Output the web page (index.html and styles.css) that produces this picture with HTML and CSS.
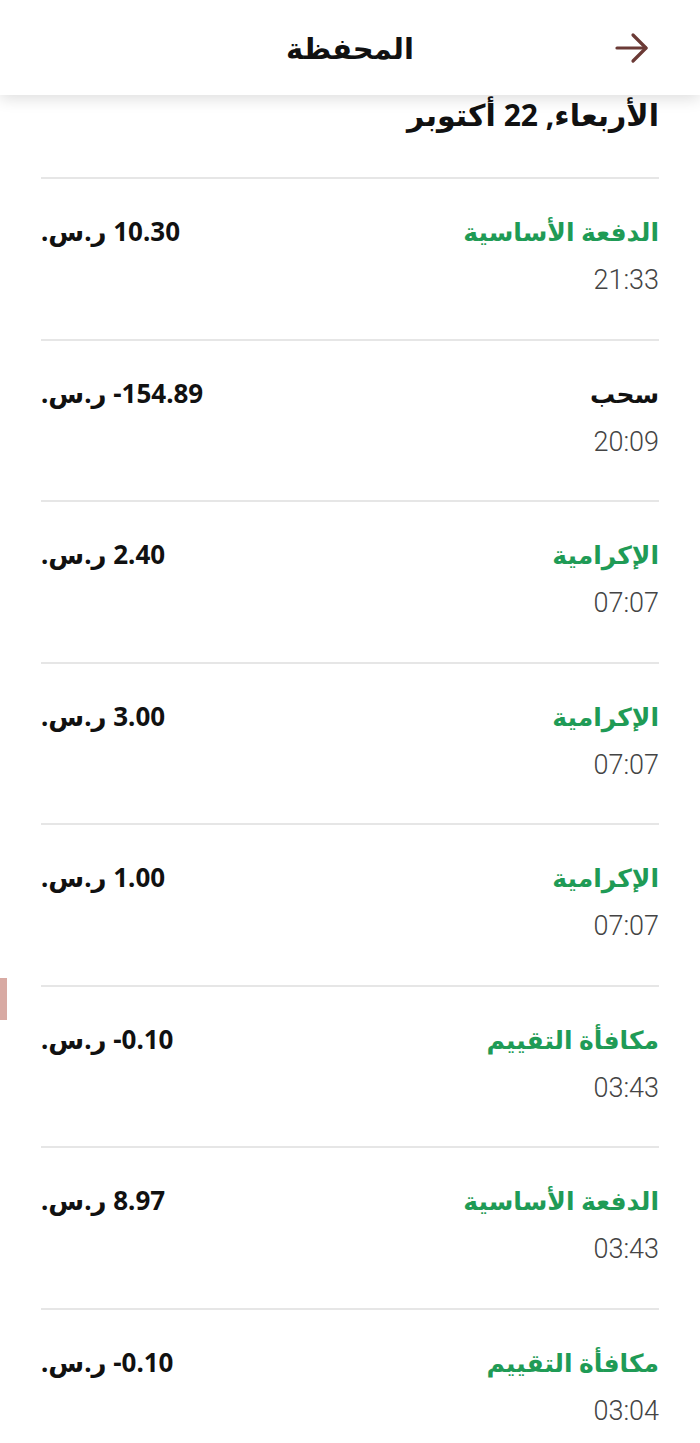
FILE: index.html
```html
<!DOCTYPE html>
<html lang="ar" dir="rtl">
<head>
    <meta charset="UTF-8">
    <meta name="viewport" content="width=device-width, initial-scale=1.0">
    <title>المحفظة</title>
    <link rel="stylesheet" href="styles.css">
</head>
<body>
    <div class="header">
        <button class="back-btn" aria-label="رجوع">
            <svg width="40" height="40" viewBox="0 0 40 40" fill="none" stroke="#6b3a36" stroke-width="3.2" stroke-linecap="round" stroke-linejoin="round">
                <path d="M5 20 H34"/>
                <path d="M21 7 L34 20 L21 33"/>
            </svg>
        </button>
        <h1 class="title">المحفظة</h1>
    </div>

    <div class="main-content">
        <h2 class="day-title">الأربعاء, 22 أكتوبر</h2>

        <div class="history-list">
            <div class="history-item">
                <div class="info">
                    <div class="label green">الدفعة الأساسية</div>
                    <div class="time">21:33</div>
                </div>
                <div class="amount" dir="ltr"><span dir="rtl">ر.س.</span> 10.30</div>
            </div>
            <div class="history-item">
                <div class="info">
                    <div class="label">سحب</div>
                    <div class="time">20:09</div>
                </div>
                <div class="amount" dir="ltr"><span dir="rtl">ر.س.</span> -154.89</div>
            </div>
            <div class="history-item">
                <div class="info">
                    <div class="label green">الإكرامية</div>
                    <div class="time">07:07</div>
                </div>
                <div class="amount" dir="ltr"><span dir="rtl">ر.س.</span> 2.40</div>
            </div>
            <div class="history-item">
                <div class="info">
                    <div class="label green">الإكرامية</div>
                    <div class="time">07:07</div>
                </div>
                <div class="amount" dir="ltr"><span dir="rtl">ر.س.</span> 3.00</div>
            </div>
            <div class="history-item">
                <div class="info">
                    <div class="label green">الإكرامية</div>
                    <div class="time">07:07</div>
                </div>
                <div class="amount" dir="ltr"><span dir="rtl">ر.س.</span> 1.00</div>
            </div>
            <div class="history-item">
                <div class="info">
                    <div class="label green">مكافأة التقييم</div>
                    <div class="time">03:43</div>
                </div>
                <div class="amount" dir="ltr"><span dir="rtl">ر.س.</span> -0.10</div>
            </div>
            <div class="history-item">
                <div class="info">
                    <div class="label green">الدفعة الأساسية</div>
                    <div class="time">03:43</div>
                </div>
                <div class="amount" dir="ltr"><span dir="rtl">ر.س.</span> 8.97</div>
            </div>
            <div class="history-item">
                <div class="info">
                    <div class="label green">مكافأة التقييم</div>
                    <div class="time">03:04</div>
                </div>
                <div class="amount" dir="ltr"><span dir="rtl">ر.س.</span> -0.10</div>
            </div>
        </div>
    </div>

    <!-- مؤشر التمرير الجانبي -->
    <div class="side-tab"></div>
</body>
</html>
```

FILE: styles.css
```css
* {
    margin: 0;
    padding: 0;
    box-sizing: border-box;
}

body {
    font-family: "Noto Sans", "DejaVu Sans", sans-serif;
    background: #fff;
    color: #111;
    width: 700px;
    min-height: 1443px;
    overflow: hidden;
    position: relative;
}

.header {
    height: 95px;
    background: #fff;
    display: flex;
    align-items: center;
    justify-content: center;
    position: relative;
    box-shadow: 0 4px 14px rgba(0, 0, 0, 0.13);
    z-index: 2;
}

.title {
    font-size: 29px;
    font-weight: 700;
    color: #111;
}

.back-btn {
    position: absolute;
    right: 48px;
    top: 28px;
    background: none;
    border: none;
    width: 40px;
    height: 40px;
}

.main-content {
    padding: 0 41px;
}

.day-title {
    font-size: 30px;
    font-weight: 700;
    color: #111;
    height: 82px;
    line-height: 40px;
}

.history-item {
    display: flex;
    justify-content: space-between;
    align-items: flex-start;
    height: 161.5px;
    border-top: 2px solid #e6e6e6;
    padding-top: 34px;
}

.label {
    font-size: 25px;
    font-weight: 700;
    color: #111;
    line-height: 36px;
}

.label.green {
    color: #1f9b56;
}

.time {
    font-family: Roboto, "Noto Sans", sans-serif;
    font-weight: 300;
    font-size: 27px;
    color: #444;
    line-height: 36px;
    margin-top: 13px;
}

.amount {
    font-size: 26px;
    font-weight: 700;
    color: #111;
    line-height: 36px;
}

.side-tab {
    position: absolute;
    left: 0;
    top: 978px;
    width: 7px;
    height: 42px;
    background: #d8aaa3;
}
```
